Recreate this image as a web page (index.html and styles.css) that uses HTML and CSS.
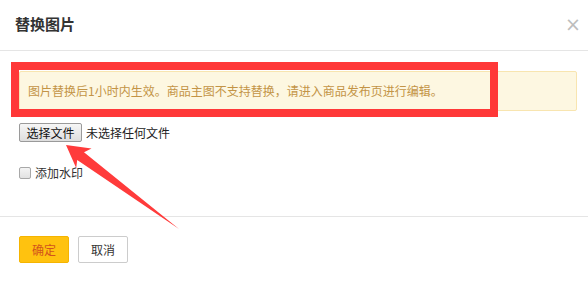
FILE: index.html
```html
<!DOCTYPE html>
<html lang="zh-CN">
<head>
<meta charset="utf-8">
<title>替换图片</title>
<link rel="stylesheet" href="styles.css">
</head>
<body>
<div class="dialog">
  <div class="dialog-header">
    <h3 class="dialog-title">替换图片</h3>
    <span class="dialog-close">×</span>
  </div>
  <div class="dialog-body">
    <div class="alert">图片替换后1小时内生效。商品主图不支持替换，请进入商品发布页进行编辑。</div>
    <div class="file-row">
      <span class="file-btn">选择文件</span>
      <span class="file-name">未选择任何文件</span>
    </div>
    <label class="check-row">
      <span class="checkbox"></span>
      <span class="check-label">添加水印</span>
    </label>
  </div>
  <div class="dialog-footer">
    <span class="btn btn-primary">确定</span>
    <span class="btn btn-default">取消</span>
  </div>
  <div class="annot-box"></div>
  <svg class="annot-arrow" width="588" height="283" viewBox="0 0 588 283">
    <polygon points="66,145 91.5,148.4 84,152.2 179,229 77.2,160 76.2,168" fill="#ff3b3b"/>
  </svg>
</div>
</body>
</html>
```

FILE: styles.css
```css
* { box-sizing: border-box; }
html, body { margin: 0; padding: 0; background: #fff; }
body {
  font-family: "Noto Sans CJK SC", "Liberation Sans", sans-serif;
  color: #333;
  width: 588px;
  height: 283px;
  overflow: hidden;
}
.dialog { position: relative; width: 588px; height: 283px; }
.dialog-header {
  height: 51px;
  border-bottom: 1px solid #e5e5e5;
  display: flex;
  align-items: center;
  justify-content: space-between;
  padding: 0 7px 0 15px;
}
.dialog-title {
  margin: 0;
  font-size: 15px;
  font-weight: bold;
  line-height: 20px;
  color: #333;
  padding-bottom: 2px;
}
.dialog-close {
  font-family: "DejaVu Sans", sans-serif;
  font-size: 19px;
  line-height: 20px;
  color: #bdbdbd;
  padding-bottom: 2px;
}
.dialog-body {
  padding: 20px 11px 0 19px;
  height: 166px;
  border-bottom: 1px solid #e5e5e5;
}
.alert {
  height: 40px;
  border: 1px solid #f8e5b0;
  background: #fdf7e1;
  color: #c39446;
  font-size: 12px;
  line-height: 38px;
  padding-left: 8px;
  border-radius: 2px;
}
.file-row {
  margin-top: 12px;
  display: flex;
  align-items: center;
  height: 19px;
}
.file-btn {
  display: inline-block;
  width: 63px;
  height: 19px;
  border: 1px solid #9a9a9a;
  border-radius: 2px;
  background: linear-gradient(#f6f6f6, #dedede);
  font-size: 12px;
  line-height: 17px;
  text-align: center;
  color: #111;
}
.file-name {
  margin-left: 4px;
  font-size: 12px;
  color: #222;
  line-height: 19px;
}
.check-row {
  margin-top: 24px;
  display: flex;
  align-items: center;
  height: 13px;
}
.checkbox {
  width: 12px;
  height: 12px;
  border: 1px solid #a8a8a8;
  border-radius: 2px;
  background: linear-gradient(#f4f4f4, #e2e2e2);
}
.check-label {
  margin-left: 4px;
  font-size: 12px;
  line-height: 13px;
  color: #333;
}
.dialog-footer {
  padding: 19px 0 0 19px;
  display: flex;
  gap: 9px;
}
.btn {
  display: inline-block;
  width: 50px;
  height: 27px;
  border-radius: 2px;
  font-size: 12px;
  line-height: 25px;
  text-align: center;
}
.btn-primary {
  background: #ffc20f;
  border: 1px solid #f5b400;
  color: #d2541c;
}
.btn-default {
  background: #fff;
  border: 1px solid #ccc;
  color: #333;
}
.annot-box {
  position: absolute;
  left: 11px;
  top: 62px;
  width: 487px;
  height: 55px;
  border: 8px solid #ff3838;
}
.annot-arrow {
  position: absolute;
  left: 0;
  top: 0;
}
```
